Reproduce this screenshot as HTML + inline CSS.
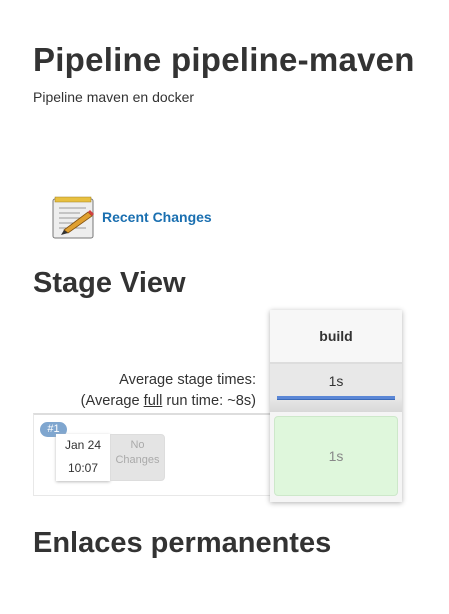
<!DOCTYPE html>
<html><head><style>
*{margin:0;padding:0;box-sizing:border-box}
body{width:449px;height:614px;background:#fff;font-family:"Liberation Sans",sans-serif;color:#333;position:relative;overflow:hidden}
.a{position:absolute}
h1{position:absolute;left:33px;top:41px;font-size:33px;font-weight:bold;color:#333;letter-spacing:0.25px}
h2{position:absolute;left:33px;font-size:29px;font-weight:bold;color:#333}
</style></head><body>
<h1>Pipeline pipeline-maven</h1>
<div class="a" style="left:33px;top:89px;font-size:14px">Pipeline maven en docker</div>
<svg class="a" style="left:50px;top:194px" width="48" height="46" viewBox="0 0 48 46">
<rect x="3" y="5" width="40" height="39" rx="2" fill="#eee" stroke="#777"/>
<rect x="5" y="3" width="36" height="5" fill="#e8c040" stroke="#a08020" stroke-width=".5"/>
<g stroke="#999" stroke-width="1"><line x1="9" y1="14" x2="36" y2="14"/><line x1="9" y1="19" x2="30" y2="19"/><line x1="9" y1="24" x2="36" y2="24"/><line x1="9" y1="29" x2="30" y2="29"/><line x1="9" y1="34" x2="36" y2="34"/></g>
<path d="M14 36 L38 18 L42 22 L18 39 Z" fill="#e0a030" stroke="#805010" stroke-width=".8"/>
<path d="M14 36 L18 39 L11 41 Z" fill="#333"/>
<path d="M38 18 L42 22 L44 20 L40 16Z" fill="#d04040"/>
</svg>
<div class="a" style="left:102px;top:209px;font-size:14px;font-weight:bold;color:#1a6fb0">Recent Changes</div>
<h2 style="top:267px">Stage View</h2>
<div class="a" style="left:40px;top:370px;width:216px;text-align:right;font-size:14.6px;line-height:21px">Average stage times:<br>(Average <u>full</u> run time: ~8s)</div>
<div class="a" style="left:33px;top:413px;width:240px;height:83px;border:1px solid #e8e8e8;border-top:2px solid #ddd"></div>
<div class="a" style="left:40px;top:422px;width:27px;height:15px;border-radius:8px;background:#7fa6cf;color:#fff;font-size:11px;text-align:center;line-height:15px">#1</div>
<div class="a" style="left:56px;top:434px;width:54px;height:47px;background:#fff;box-shadow:0 1px 3px #bbb;font-size:12px;text-align:center;line-height:23px">Jan 24<br>10:07</div>
<div class="a" style="left:110px;top:434px;width:55px;height:47px;background:#e4e4e4;border-radius:0 4px 4px 0;border:1px solid #ddd;color:#aaa;font-size:11px;text-align:center;line-height:15px;padding-top:3px">No<br>Changes</div>
<div class="a" style="left:270px;top:310px;width:132px;height:192px;background:#f5f5f5;box-shadow:0 1px 5px rgba(0,0,0,.3)">
<div style="height:52px;background:#f7f7f7;text-align:center;line-height:52px;font-weight:bold;font-size:14px">build</div>
<div style="height:50px;background:linear-gradient(#e8e8e8 70%,#d8d8d8);border-top:2px solid #ddd;text-align:center;font-size:14px;padding-top:9px">1s<div style="margin:7px 7px 0;height:4px;background:#5b87d6;border-bottom:1px solid #3b6ab8"></div></div>
<div style="margin:4px;height:80px;background:#dff7dc;border:1px solid #cde8ca;border-radius:4px;text-align:center;line-height:78px;color:#888;font-size:14px">1s</div>
</div>
<h2 style="top:527px">Enlaces permanentes</h2>
</body></html>
